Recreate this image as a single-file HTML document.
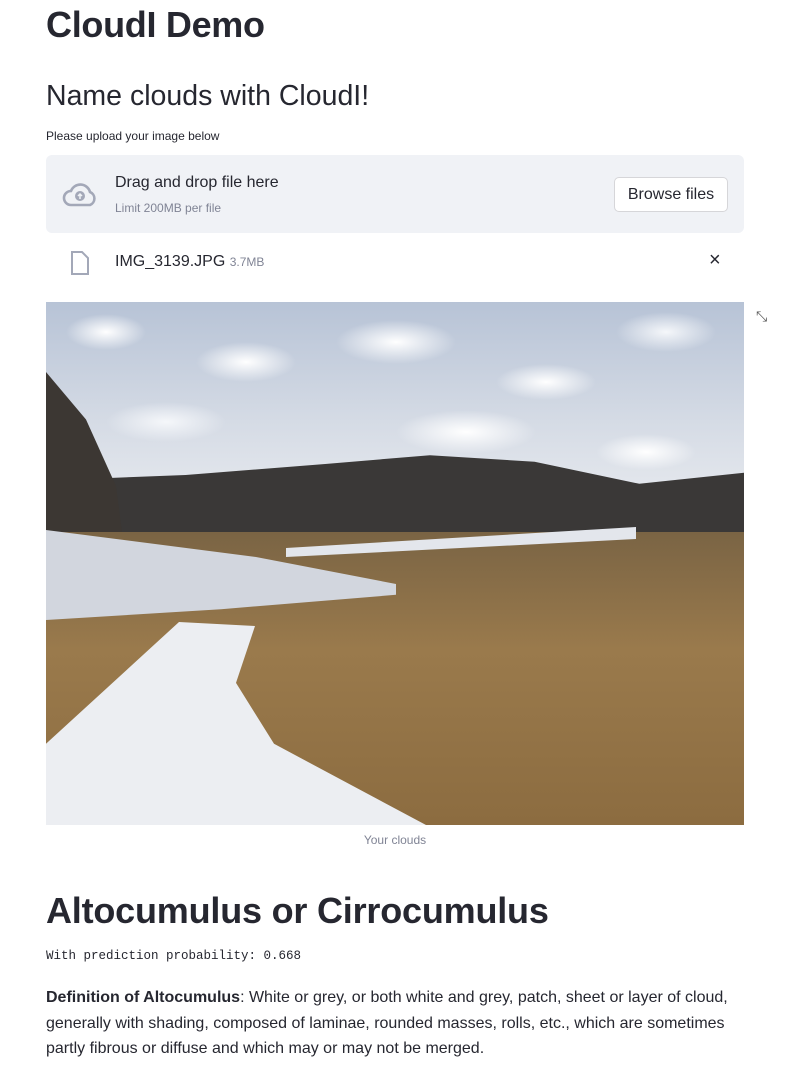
<!DOCTYPE html>
<html><head><meta charset="utf-8"><style>
*{margin:0;padding:0;box-sizing:border-box}
body{width:810px;height:1070px;background:#fff;font-family:"Liberation Sans",sans-serif;color:#262730;position:relative;overflow:hidden}
.a{position:absolute}
h1{font-size:36px;font-weight:700;letter-spacing:-0.3px}
</style></head><body>
<h1 class="a" style="left:46px;top:4px">CloudI Demo</h1>
<div class="a" style="left:46px;top:80px;font-size:28.5px;font-weight:400">Name clouds with CloudI!</div>
<div class="a" style="left:46px;top:129px;font-size:12px">Please upload your image below</div>
<div class="a" style="left:46px;top:155px;width:698px;height:78px;background:#f0f2f6;border-radius:6px">
 <svg class="a" style="left:16px;top:26px" width="36" height="26" viewBox="0 0 36 26"><path d="M9 24 H28 A7 7 0 0 0 28 11 A10 10 0 0 0 9 10 A7 7 0 0 0 9 24 Z" fill="none" stroke="#a3a8b8" stroke-width="2.6"/><circle cx="18" cy="15" r="5" fill="#a3a8b8"/><path d="M18 18V13M16 15l2-2 2 2" stroke="#f0f2f6" stroke-width="1.5" fill="none"/></svg>
 <div class="a" style="left:69px;top:19px;font-size:16px">Drag and drop file here</div>
 <div class="a" style="left:69px;top:46px;font-size:12px;color:#808495">Limit 200MB per file</div>
 <div class="a" style="left:568px;top:22px;width:114px;height:35px;background:#fff;border:1px solid #d6d6d9;border-radius:5px;font-size:16px;line-height:33px;text-align:center">Browse files</div>
</div>
<svg class="a" style="left:70px;top:250px" width="20" height="26" viewBox="0 0 20 26"><path d="M2 2H12L18 8V24H2Z" fill="none" stroke="#a3a8b8" stroke-width="2"/></svg>
<div class="a" style="left:115px;top:253px;font-size:16px">IMG_3139.JPG <span style="font-size:12px;color:#808495">3.7MB</span></div>
<div class="a" style="left:709px;top:249px;font-size:20px">×</div>
<div class="a" style="left:756px;top:308px;font-size:14px;color:#555">⤡</div>
<div class="a" style="left:46px;top:302px;width:698px;height:523px;overflow:hidden;background:#8a6f48">
 <div class="a" style="left:0;top:0;width:698px;height:200px;background:
 radial-gradient(ellipse 40px 18px at 60px 30px,#fff,transparent),
 radial-gradient(ellipse 50px 20px at 200px 60px,#fff,transparent),
 radial-gradient(ellipse 60px 22px at 350px 40px,#fff,transparent),
 radial-gradient(ellipse 50px 18px at 500px 80px,#fff,transparent),
 radial-gradient(ellipse 50px 20px at 620px 30px,#f5f7fa,transparent),
 radial-gradient(ellipse 60px 20px at 120px 120px,#f5f7fa,transparent),
 radial-gradient(ellipse 70px 22px at 420px 130px,#fff,transparent),
 radial-gradient(ellipse 50px 18px at 600px 150px,#fff,transparent),
 linear-gradient(#b7c3d6,#d5dbe5 60%,#e6e9ee)"></div>
 <div class="a" style="left:0;top:140px;width:698px;height:110px;background:#3a3837;clip-path:polygon(0 35%,20% 30%,40% 20%,55% 12%,70% 18%,85% 38%,100% 28%,100% 100%,0 100%)"></div>
 <div class="a" style="left:0;top:70px;width:100px;height:190px;background:#3c3733;clip-path:polygon(0 0,40% 25%,70% 60%,80% 100%,0 100%)"></div>
 <div class="a" style="left:0;top:230px;width:698px;height:293px;background:linear-gradient(#7a6444,#9a7a4c 40%,#8c6c40)"></div>
 <div class="a" style="left:0;top:228px;width:350px;height:90px;background:#d2d6de;clip-path:polygon(0 0,60% 30%,100% 60%,100% 72%,50% 88%,0 100%)"></div>
 <div class="a" style="left:240px;top:225px;width:350px;height:30px;background:#e3e6ec;clip-path:polygon(0 70%,100% 0,100% 40%,0 100%)"></div>
 <div class="a" style="left:0;top:320px;width:380px;height:203px;background:#eceef2;clip-path:polygon(35% 0,55% 2%,50% 30%,60% 60%,100% 100%,0 100%,0 60%)"></div>
</div>
<div class="a" style="left:46px;top:833px;width:698px;text-align:center;font-size:12px;color:#808495">Your clouds</div>
<div class="a" style="left:46px;top:890px;font-size:36px;font-weight:700;letter-spacing:-0.2px">Altocumulus or Cirrocumulus</div>
<div class="a" style="left:46px;top:949px;font-family:'Liberation Mono',monospace;font-size:12.5px">With prediction probability: 0.668</div>
<div class="a" style="left:46px;top:985px;width:720px;font-size:16px;line-height:25.5px"><b>Definition of Altocumulus</b>: White or grey, or both white and grey, patch, sheet or layer of cloud, generally with shading, composed of laminae, rounded masses, rolls, etc., which are sometimes partly fibrous or diffuse and which may or may not be merged.</div>
</body></html>
